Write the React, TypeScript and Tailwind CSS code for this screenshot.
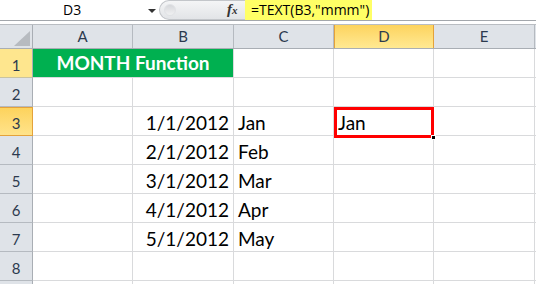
import React from "react";

const font = { fontFamily: "Lato, 'Open Sans', sans-serif" };

const rows: { b?: string; c?: string; d?: string }[] = [
  {},
  {},
  { b: "1/1/2012", c: "Jan", d: "Jan" },
  { b: "2/1/2012", c: "Feb" },
  { b: "3/1/2012", c: "Mar" },
  { b: "4/1/2012", c: "Apr" },
  { b: "5/1/2012", c: "May" },
  {},
  {},
];

const cols = [
  { key: "A", w: "w-[100px]" },
  { key: "B", w: "w-[101px]" },
  { key: "C", w: "w-[100px]" },
  { key: "D", w: "w-[100px]" },
  { key: "E", w: "w-[101px]" },
];

function Cell({ w, text, align }: { w: string; text?: string; align?: "left" | "right" }) {
  return (
    <div
      className={`${w} shrink-0 h-full border-b border-r border-[#d9dadc] flex items-end pb-[3px] text-[19px] leading-none text-black ${
        align === "right" ? "justify-end pr-[4px]" : "pl-[4px]"
      }`}
    >
      {text}
    </div>
  );
}

export default function App() {
  return (
    <div className="w-[536px] h-[284px] overflow-hidden bg-white relative" style={font}>
      {/* Formula bar */}
      <div className="h-[21px] flex border-b border-[#a3a7ac]">
        <div className="w-[159px] shrink-0 relative flex items-center">
          <span className="absolute left-[63px] top-[3px] text-[14px] leading-none text-black" style={{ fontFamily: "'Open Sans', sans-serif" }}>
            D3
          </span>
          <div className="absolute left-[148px] top-[9px] w-0 h-0 border-l-[4px] border-r-[4px] border-t-[4px] border-l-transparent border-r-transparent border-t-[#333]" />
        </div>
        <div className="w-[86px] shrink-0 relative rounded-l-[11px] border-l border-t border-b border-[#c3c6ca] bg-gradient-to-b from-[#f4f5f6] to-[#e2e4e7]">
          <div className="absolute left-[4px] top-[3px] w-[12px] h-[12px] rounded-full bg-gradient-to-b from-[#d6d8db] to-[#f0f1f2] border border-[#e0e2e5]" />
          <span className="absolute left-[67px] top-[1px] text-[15px] leading-none italic font-bold text-[#333]" style={{ fontFamily: "'Liberation Serif', serif" }}>
            f<span className="text-[11px]">x</span>
          </span>
        </div>
        <div className="w-[127px] shrink-0 bg-[#ffff66] flex items-center pl-[6px] text-[14px] leading-none text-black" style={{ fontFamily: "'Open Sans', sans-serif" }}>
          =TEXT(B3,"mmm")
        </div>
        <div className="flex-1 bg-white" />
      </div>
      <div className="h-[3px] bg-white" />
      <div className="h-[1px] bg-[#b9bdc2]" />

      {/* Column headers */}
      <div className="h-[24px] flex bg-[#dfe3e8] border-b border-[#a9aeb4]">
        <div className="w-[33px] shrink-0 border-r border-[#a9aeb4] relative">
          <svg className="absolute left-[14px] top-[6px]" width="16" height="15" viewBox="0 0 16 15">
            <polygon points="16,0 16,15 0,15" fill="#b7bbc0" />
          </svg>
        </div>
        {cols.map((c) => (
          <div
            key={c.key}
            className={`${c.w} shrink-0 flex items-center justify-center text-[15px] text-[#2c3a4e] ${
              c.key === "D"
                ? "bg-gradient-to-b from-[#fdd35c] to-[#ffe992] border-x border-[#e4a23a]"
                : "border-r border-[#b5bac0]"
            }`}
          >
            {c.key}
          </div>
        ))}
        <div className="flex-1" />
      </div>

      {/* Rows */}
      {rows.map((r, i) => {
        const n = i + 1;
        return (
          <div key={n} className="h-[29px] flex">
            <div
              className={`w-[33px] shrink-0 flex items-end justify-center pb-[4px] text-[15px] leading-none text-[#2c3a4e] border-r ${
                n === 3
                  ? "bg-gradient-to-b from-[#fdd35c] to-[#ffe38a] border-y border-[#e4a23a]"
                  : n === 1
                  ? "bg-[#fee68e] border-b border-[#c9c3a0] border-r-[#a9aeb4]"
                  : "bg-[#dfe3e8] border-b border-[#b5bac0] border-r-[#a9aeb4]"
              }`}
            >
              {n < 9 ? n : ""}
            </div>
            {n === 1 ? (
              <div className="w-[201px] shrink-0 h-full bg-[#00b050] border-b border-r border-[#d9dadc] flex items-center justify-center pt-[1px] text-[19px] font-bold text-white">
                MONTH Function
              </div>
            ) : (
              <>
                <Cell w="w-[100px]" />
                <Cell w="w-[101px]" text={r.b} align="right" />
              </>
            )}
            <Cell w="w-[100px]" text={r.c} />
            <Cell w="w-[100px]" text={r.d} />
            <Cell w="w-[101px]" />
            <div className="flex-1 border-b border-[#d9dadc]" />
          </div>
        );
      })}

      {/* Active cell selection */}
      <div className="absolute left-[334px] top-[107px] w-[100px] h-[31px] border-[3px] border-[#ff0000] pointer-events-none">
        <div className="absolute right-[-5px] bottom-[-5px] w-[5px] h-[5px] bg-black border border-white" />
      </div>
    </div>
  );
}
